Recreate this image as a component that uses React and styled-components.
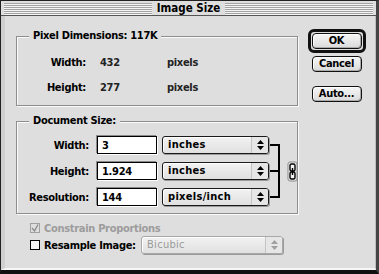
import styled, { createGlobalStyle } from "styled-components"

const Global = createGlobalStyle`
body {
margin: 0;
background: #dcdcdc;
}
* {
box-sizing: border-box;
}
`

const font = `"Liberation Sans Narrow", "DejaVu Sans Condensed", "Liberation Sans", sans-serif`

const Window = styled.div`
width: 379px;
height: 274px;
background: #dedede;
border: 1px solid #222;
border-bottom: 4px solid #111;
border-right: 3px solid #444;
font-family: ${font};
font-weight: bold;
font-size: 11px;
letter-spacing: -0.3px;
color: #000;
display: flex;
flex-direction: column;
`
const TitleBar = styled.div`
height: 15px;
padding: 1px 3px 0;
border-bottom: 1px solid #555;
background: #dedede;
display: flex;
align-items: center;
justify-content: center;
`
const Stripes = styled.div`
flex: 1;
height: 12px;
background: repeating-linear-gradient(to bottom, #a2a2a2 0, #a2a2a2 1px, #f4f4f4 1px, #f4f4f4 2px);
`
const Title = styled.div`
padding: 0 5px;
font-size: 11.5px;
line-height: 13px;
letter-spacing: 0;
`
const Body = styled.div`
flex: 1;
display: flex;
padding: 20px 0 0 11px;
border-left: 4px solid #cfcfcf;
border-right: 1px solid #bdbdbd;
border-bottom: 2px solid #f6f6f6;
`
const Main = styled.div`
width: 282px;
display: flex;
flex-direction: column;
`
const Group = styled.div`
position: relative;
border: 1px solid #8e8e8e;
box-shadow: 1px 1px 0 #fafafa, inset 1px 1px 0 #fafafa;
height: ${p => p.$h}px;
margin-bottom: ${p => p.$mb || 0}px;
`
const Legend = styled.div`
position: absolute;
left: 12px;
top: -8px;
padding: 0 4px;
background: #dedede;
line-height: 14px;
`
const InfoGrid = styled.div`
display: grid;
grid-template-columns: 69px 53px auto;
column-gap: 14px;
row-gap: 11px;
padding-top: 19px;
line-height: 14px;
`
const Label = styled.div`
text-align: right;
`
const Value = styled.div`
color: #222;
`
const FormGrid = styled.div`
display: grid;
grid-template-columns: 75px 60px 107px 9px auto;
grid-template-rows: repeat(3, 18px);
column-gap: 5px;
row-gap: 8px;
padding-top: 14px;
align-items: center;
`
const FormLabel = styled.div`
text-align: right;
margin-right: 3px;
`
const Input = styled.div`
height: 18px;
border: 1px solid #000;
background: #fff;
box-shadow: -1px -1px 0 #8a8a8a, 1px 1px 0 #fff;
padding: 1px 4px 0;
line-height: 15px;
`
const Select = styled.div`
height: 18px;
border: 1px solid #1a1a1a;
border-radius: 3px;
background: linear-gradient(#f2f2f2, #e0e0e0);
box-shadow: 1px 1px 0 #9a9a9a, inset 1px 1px 0 #fff;
display: flex;
align-items: stretch;
color: ${p => (p.$disabled ? "#9a9a9a" : "#000")};
border-color: ${p => (p.$disabled ? "#a8a8a8" : "#1a1a1a")};
`
const SelectText = styled.div`
flex: 1;
padding: 0 5px;
line-height: 16px;
letter-spacing: 0.3px;
`
const Arrows = styled.div`
width: 17px;
border-left: 1px solid #c4c4c4;
background: #e6e6e6;
display: flex;
align-items: center;
justify-content: center;
border-radius: 0 2px 2px 0;
`
const Bracket = styled.div`
grid-column: 4;
grid-row: 1 / 4;
align-self: stretch;
margin: 8px 0 8px -4px;
width: 10px;
border: 2px solid #000;
border-left: none;
position: relative;
&::after {
content: "";
position: absolute;
left: 0;
right: 0;
top: 50%;
margin-top: -1px;
height: 2px;
background: #000;
}
`
const Link = styled.div`
grid-column: 5;
grid-row: 1 / 4;
align-self: center;
margin-left: -2px;
display: flex;
`
const CheckRow = styled.div`
display: flex;
align-items: center;
margin-left: 14px;
height: ${p => p.$h}px;
color: ${p => (p.$disabled ? "#9c9c9c" : "#000")};
`
const Box = styled.div`
width: 10px;
height: 10px;
border: 1px solid ${p => (p.$disabled ? "#a0a0a0" : "#000")};
background: ${p => (p.$disabled ? "#dedede" : "#f4f4f4")};
margin-right: 4px;
display: flex;
align-items: center;
justify-content: center;
`
const ResampleSelect = styled(Select)`
width: 142px;
margin-left: auto;
margin-right: 15px;
font-weight: normal;
`
const Side = styled.div`
width: 61px;
margin-left: 8px;
margin-top: -7px;
display: flex;
flex-direction: column;
align-items: center;
`
const DefaultRing = styled.div`
border: 3px solid #111;
border-radius: 6px;
padding: 1px;
margin-bottom: 3px;
`
const Button = styled.div`
width: ${p => p.$w || 50}px;
height: 16px;
border: 1px solid #111;
border-radius: 4px;
background: linear-gradient(#f6f6f6, #dadada);
box-shadow: inset 1px 1px 0 #fff, inset -1px -1px 0 #aaa;
text-align: center;
line-height: 14px;
margin-bottom: ${p => p.$mb || 0}px;
`

function UpDown({ color = "#000" }) {
  return (
    <svg width="7" height="10" viewBox="0 0 7 10">
      <path d="M3.5 0 L7 4 L0 4 Z M0 6 L7 6 L3.5 10 Z" fill={color} />
    </svg>
  )
}

function ChainLink() {
  return (
    <svg width="13" height="21" viewBox="0 0 13 21">
      <rect x="2" y="1" width="9" height="19" rx="2" fill="#f4f4f4" stroke="#888" strokeWidth="1" />
      <rect x="4" y="3" width="5" height="7" rx="1.5" fill="none" stroke="#000" strokeWidth="1.4" />
      <rect x="4" y="11" width="5" height="7" rx="1.5" fill="none" stroke="#000" strokeWidth="1.4" />
      <line x1="6.5" y1="7" x2="6.5" y2="14" stroke="#000" strokeWidth="1.4" />
    </svg>
  )
}

const App = () => {
  return (
    <>
      <Global />
      <Window>
        <TitleBar>
          <Stripes />
          <Title>Image Size</Title>
          <Stripes />
        </TitleBar>
        <Body>
          <Main>
            <Group $h={70} $mb={15}>
              <Legend>Pixel Dimensions: 117K</Legend>
              <InfoGrid>
                <Label>Width:</Label>
                <Value>432</Value>
                <Value>pixels</Value>
                <Label>Height:</Label>
                <Value>277</Value>
                <Value>pixels</Value>
              </InfoGrid>
            </Group>
            <Group $h={93} $mb={7}>
              <Legend>Document Size:</Legend>
              <FormGrid>
                <FormLabel>Width:</FormLabel>
                <Input>3</Input>
                <Select>
                  <SelectText>inches</SelectText>
                  <Arrows><UpDown /></Arrows>
                </Select>
                <FormLabel style={{ gridRow: 2, gridColumn: 1 }}>Height:</FormLabel>
                <Input style={{ gridRow: 2, gridColumn: 2 }}>1.924</Input>
                <Select style={{ gridRow: 2, gridColumn: 3 }}>
                  <SelectText>inches</SelectText>
                  <Arrows><UpDown /></Arrows>
                </Select>
                <FormLabel style={{ gridRow: 3, gridColumn: 1 }}>Resolution:</FormLabel>
                <Input style={{ gridRow: 3, gridColumn: 2 }}>144</Input>
                <Select style={{ gridRow: 3, gridColumn: 3 }}>
                  <SelectText>pixels/inch</SelectText>
                  <Arrows><UpDown /></Arrows>
                </Select>
                <Bracket />
                <Link><ChainLink /></Link>
              </FormGrid>
            </Group>
            <CheckRow $h={14} $disabled>
              <Box $disabled>
                <svg width="8" height="8" viewBox="0 0 8 8">
                  <path d="M1 4 L3.5 7 L7 0.5" fill="none" stroke="#8a8a8a" strokeWidth="1.3" />
                </svg>
              </Box>
              Constrain Proportions
            </CheckRow>
            <CheckRow $h={20}>
              <Box />
              Resample Image:
              <ResampleSelect $disabled>
                <SelectText>Bicubic</SelectText>
                <Arrows><UpDown color="#a0a0a0" /></Arrows>
              </ResampleSelect>
            </CheckRow>
          </Main>
          <Side>
            <DefaultRing>
              <Button>OK</Button>
            </DefaultRing>
            <Button $mb={14}>Cancel</Button>
            <Button>Auto...</Button>
          </Side>
        </Body>
      </Window>
    </>
  )
}

export default App
